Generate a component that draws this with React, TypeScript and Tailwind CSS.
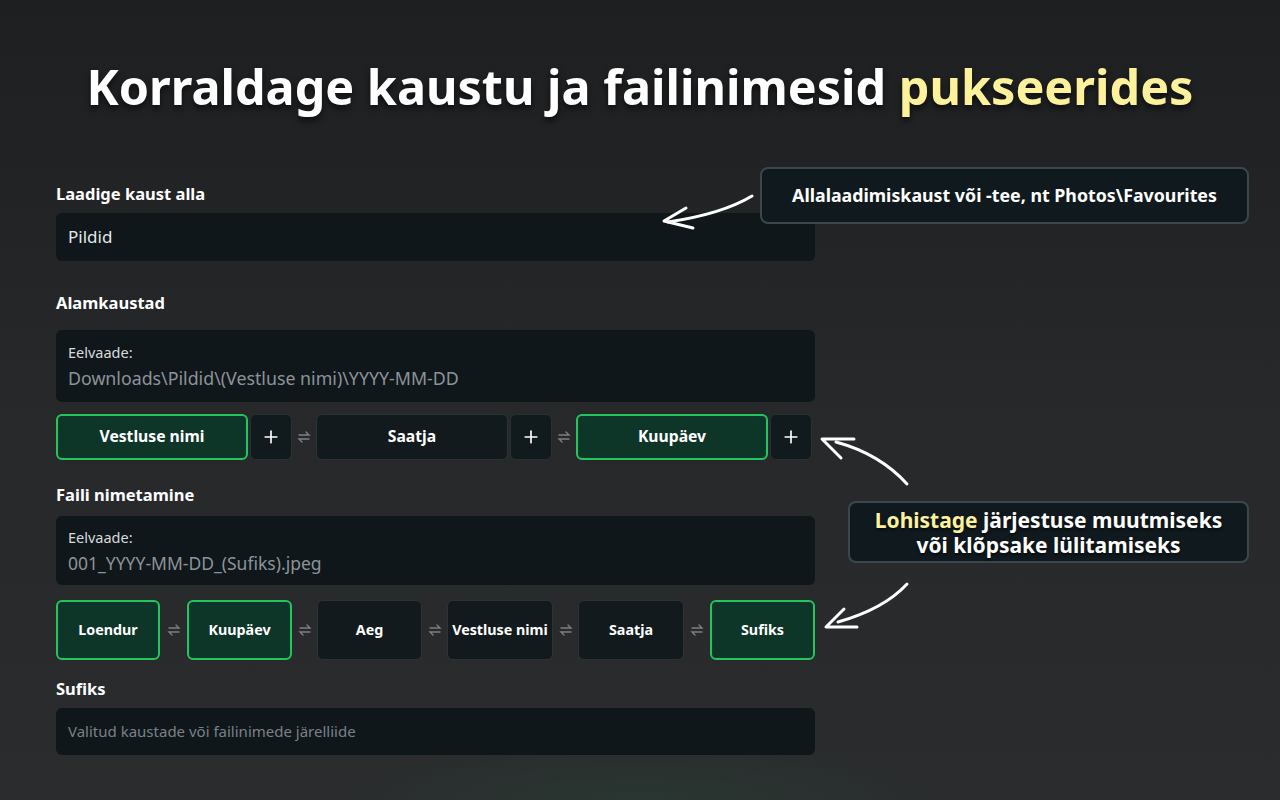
import React from 'react';
import { Plus } from 'lucide-react';

const font = { fontFamily: '"Noto Sans", "Open Sans", sans-serif' };

const Swap = () => (
  <svg width="14" height="14" viewBox="0 0 14 14" fill="none" stroke="#7a8085" strokeWidth="1.4" strokeLinecap="round">
    <path d="M2 5 H12 L9 2" />
    <path d="M12 9 H2 L5 12" />
  </svg>
);

const Chip = ({ label, active, className }: { label: string; active?: boolean; className: string }) => (
  <div
    className={
      'flex items-center justify-center rounded-md font-bold text-white ' +
      className +
      (active ? ' bg-[#0d3528] border-2 border-[#22c55e]' : ' bg-[#121a1d] border border-[#2c3337]')
    }
  >
    {label}
  </div>
);

const PlusBtn = () => (
  <div className="flex h-[46px] w-[42px] items-center justify-center rounded-md border border-[#283034] bg-[#111a1d] text-white">
    <Plus size={20} strokeWidth={2} />
  </div>
);

const SwapGap = ({ w }: { w: string }) => (
  <div className={'flex items-center justify-center ' + w}>
    <Swap />
  </div>
);

const Label = ({ children, className }: { children: React.ReactNode; className: string }) => (
  <div className={'text-[16.5px] font-bold leading-6 text-white ' + className}>{children}</div>
);

export default function App() {
  return (
    <div
      style={font}
      className="relative h-[800px] w-[1280px] overflow-hidden bg-[radial-gradient(ellipse_300px_60px_at_50%_100%,rgba(34,197,94,0.07),transparent),linear-gradient(180deg,#1d1f21_0%,#26282a_50%,#2a2c2e_100%)]"
    >
      <h1 className="pt-[55px] text-center text-[48.5px] font-bold leading-[62px] text-white [text-shadow:0_4px_6px_rgba(0,0,0,0.6)]">
        Korraldage kaustu ja failinimesid <span className="text-[#fdf29b]">pukseerides</span>
      </h1>

      <div className="ml-[56px] w-[759px] pt-[65px]">
        <Label className="">Laadige kaust alla</Label>
        <div className="mt-[7px] flex h-[48px] items-center rounded-md bg-[#0f171b] px-3 text-[17px] text-[#e5e7e9]">
          Pildid
        </div>

        <Label className="mt-[30px]">Alamkaustad</Label>
        <div className="mt-[15px] flex h-[72px] flex-col justify-center rounded-md bg-[#0f171b] px-3">
          <div className="text-[14.5px] leading-5 text-[#d8dbdd]">Eelvaade:</div>
          <div className="mt-[4px] text-[17.8px] leading-6 text-[#8d9397]">
            {'Downloads\\Pildid\\(Vestluse nimi)\\YYYY-MM-DD'}
          </div>
        </div>

        <div className="mt-[12px] flex items-center">
          <Chip label="Vestluse nimi" active className="h-[46px] w-[192px] text-[15.7px]" />
          <div className="w-[2px]" />
          <PlusBtn />
          <SwapGap w="w-[24px]" />
          <Chip label="Saatja" className="h-[46px] w-[192px] text-[15.7px]" />
          <div className="w-[2px]" />
          <PlusBtn />
          <SwapGap w="w-[24px]" />
          <Chip label="Kuupäev" active className="h-[46px] w-[192px] text-[15.7px]" />
          <div className="w-[2px]" />
          <PlusBtn />
        </div>

        <Label className="mt-[23px]">Faili nimetamine</Label>
        <div className="mt-[9px] flex h-[69px] flex-col justify-center rounded-md bg-[#0f171b] px-3">
          <div className="text-[14.5px] leading-5 text-[#d8dbdd]">Eelvaade:</div>
          <div className="mt-[4px] text-[17.5px] leading-6 text-[#8d9397]">001_YYYY-MM-DD_(Sufiks).jpeg</div>
        </div>

        <div className="mt-[15px] flex items-center">
          <Chip label="Loendur" active className="h-[60px] w-[104px] text-[14.3px]" />
          <SwapGap w="w-[27px]" />
          <Chip label="Kuupäev" active className="h-[60px] w-[105px] text-[14.3px]" />
          <SwapGap w="w-[25px]" />
          <Chip label="Aeg" className="h-[60px] w-[105px] text-[14.3px]" />
          <SwapGap w="w-[25px]" />
          <Chip label="Vestluse nimi" className="h-[60px] w-[106px] text-[14.3px]" />
          <SwapGap w="w-[25px]" />
          <Chip label="Saatja" className="h-[60px] w-[106px] text-[14.3px]" />
          <SwapGap w="w-[26px]" />
          <Chip label="Sufiks" active className="h-[60px] w-[105px] text-[14.3px]" />
        </div>

        <Label className="mt-[17px]">Sufiks</Label>
        <div className="mt-[7px] flex h-[47px] items-center rounded-md bg-[#0f171b] px-3 text-[15px] text-[#7b8186]">
          Valitud kaustade või failinimede järelliide
        </div>
      </div>

      {/* callouts */}
      <div className="absolute left-[760px] top-[167px] flex h-[57px] w-[489px] items-center justify-center rounded-lg border-2 border-[#3a484d] bg-[#101a1e] text-[17.8px] font-bold text-white">
        {'Allalaadimiskaust või -tee, nt Photos\\Favourites'}
      </div>
      <div className="absolute left-[848px] top-[501px] flex h-[62px] w-[401px] flex-col items-center justify-center rounded-lg border-2 border-[#3a484d] bg-[#101a1e] text-center text-[21px] font-bold text-white [text-shadow:0_2px_3px_rgba(0,0,0,0.6)]">
        <div className="leading-[28px]">
          <span className="text-[#fdf29b]">Lohistage</span> järjestuse muutmiseks
        </div>
        <div className="-mt-[3px] leading-[28px]">või klõpsake lülitamiseks</div>
      </div>

      <svg className="pointer-events-none absolute left-0 top-0" width="1280" height="800" fill="none" stroke="white" strokeWidth="3" strokeLinecap="round" strokeLinejoin="round">
        <path d="M752 196 Q 722 214 668 222" />
        <path d="M686 208 L664 221 L693 228" />
        <path d="M907 484 Q 880 454 836 442" />
        <path d="M854 439 L822 439 L841 458" />
        <path d="M907 584 Q 884 609 838 622" />
        <path d="M844 609 L826 627 L857 627" />
      </svg>
    </div>
  );
}
